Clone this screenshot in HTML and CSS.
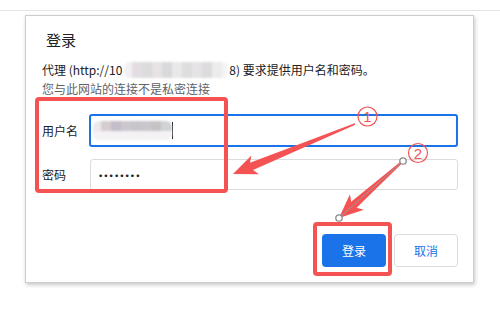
FILE: index.html
```html
<!DOCTYPE html>
<html lang="zh-CN">
<head>
<meta charset="utf-8">
<title>登录</title>
<link rel="stylesheet" href="styles.css">
</head>
<body>
<div class="page">
  <div class="topbar"></div>
  <div class="dialog">
    <div class="title">登录</div>
    <div class="msg">代理 (http://10<span class="mosaic msg-mosaic"></span>8) 要求提供用户名和密码。</div>
    <div class="note">您与此网站的连接不是私密连接</div>
    <div class="row row-user">
      <label class="label">用户名</label>
      <div class="field field-focus"><span class="mosaic user-mosaic"></span><span class="caret"></span></div>
    </div>
    <div class="row row-pass">
      <label class="label">密码</label>
      <div class="field field-plain"><span class="dots">••••••••</span></div>
    </div>
    <div class="actions">
      <button class="btn btn-primary">登录</button>
      <button class="btn btn-secondary">取消</button>
    </div>
  </div>
  <svg class="annot" width="500" height="317" viewBox="0 0 500 317">
    <rect x="37" y="99" width="189" height="92" rx="2" fill="none" stroke="#f55353" stroke-width="4"/>
    <rect x="315" y="224" width="75" height="50" rx="2" fill="none" stroke="#f55353" stroke-width="4"/>
    <polygon fill="#f55353" points="354.7,123.3 250,162.7 251.4,155.6 233,174 259,174.2 253,170.1 355.3,124.7"/>
    <polygon fill="#f55353" points="402.3,160.3 351.2,201.7 349.9,194.2 339,218 363.9,209.8 356.6,207.7 403.7,161.7"/>
    <line x1="403" y1="161" x2="339" y2="218" stroke="#9a9a9a" stroke-width="1"/>
    <circle cx="403" cy="161" r="3.2" fill="#fff" stroke="#8a8a8a" stroke-width="1.3"/>
    <circle cx="339" cy="218" r="3.2" fill="#fff" stroke="#8a8a8a" stroke-width="1.3"/>
    <circle cx="367.5" cy="116.5" r="9.5" fill="none" stroke="#f55353" stroke-width="1.2"/>
    <text x="367.5" y="122" class="num">1</text>
    <circle cx="418" cy="153" r="9.5" fill="none" stroke="#f55353" stroke-width="1.2"/>
    <text x="418" y="158.5" class="num">2</text>
  </svg>
</div>
</body>
</html>
```
FILE: styles.css
```css
html, body {
  margin: 0;
  padding: 0;
  background: #ffffff;
}
body {
  font-family: "Noto Sans CJK SC", "Noto Sans", sans-serif;
  color: #202124;
}
.page {
  position: relative;
  width: 500px;
  height: 317px;
  overflow: hidden;
}
.topbar {
  height: 10px;
  border-bottom: 1px solid #e4e4e4;
}
.dialog {
  margin: 4px 0 0 25px;
  width: 449px;
  height: 268px;
  box-sizing: border-box;
  border: 1px solid #cdcdcd;
  box-shadow: 1px 2px 4px rgba(0, 0, 0, 0.22);
  padding: 14px 15px 15px 16px;
  display: flex;
  flex-direction: column;
  background: #fff;
}
.title {
  font-size: 15px;
  line-height: 20px;
  margin-left: 4px;
  color: #202124;
}
.msg {
  margin-top: 11px;
  font-size: 12px;
  line-height: 18px;
  color: #202124;
  white-space: nowrap;
  display: flex;
  align-items: center;
}
.note {
  margin-top: 1px;
  font-size: 12px;
  line-height: 18px;
  color: #5f6368;
}
.mosaic {
  display: inline-block;
  filter: blur(1.2px);
  border-radius: 6px;
}
.msg-mosaic {
  width: 104px;
  height: 16px;
  margin: 0 1px 0 2px;
  background:
    linear-gradient(to right,
      #f2f0f2 0 8px, #e3dde3 8px 18px, #dcdcdc 18px 28px, #e6e2e6 28px 38px,
      #d9d9db 38px 48px, #e9e9e9 48px 58px, #dedede 58px 68px, #e6e3e6 68px 78px,
      #dcdcdc 78px 88px, #ececec 88px 98px, #f4f4f4 98px 104px);
}
.row {
  display: flex;
  align-items: center;
}
.row-user {
  margin-top: 16px;
  height: 33px;
}
.row-pass {
  margin-top: 12px;
  height: 31px;
}
.label {
  width: 47px;
  font-size: 12px;
  line-height: 18px;
  color: #202124;
  flex: none;
}
.field {
  flex: 1;
  height: 100%;
  box-sizing: border-box;
  border-radius: 3px;
  display: flex;
  align-items: center;
}
.field-focus {
  border: 2px solid #1a73e8;
  padding-left: 2px;
}
.field-plain {
  border: 1px solid #dadce0;
  margin-left: 1px;
  padding-left: 7px;
}
.user-mosaic {
  width: 79px;
  height: 19px;
  background:
    linear-gradient(to bottom, transparent 0 10px, #f4f2f4 10px 19px),
    linear-gradient(to right,
      #ece9ec 0 8px, #d4cccf 8px 18px, #c4bcc9 18px 28px, #cbc7cd 28px 38px,
      #c7c5cc 38px 48px, #cbc6cb 48px 58px, #c6c3c4 58px 68px, #cfd2d6 68px 79px);
}
.caret {
  width: 1px;
  height: 17px;
  background: #202124;
  margin-left: 0;
}
.dots {
  font-family: "DejaVu Sans", sans-serif;
  font-size: 9px;
  line-height: 12px;
  color: #202124;
  letter-spacing: 0;
  margin-top: 2px;
}
.actions {
  margin-top: 44px;
  display: flex;
  justify-content: flex-end;
  gap: 8px;
}
.btn {
  width: 64px;
  height: 33px;
  box-sizing: border-box;
  border-radius: 4px;
  font-family: "Noto Sans CJK SC", "Noto Sans", sans-serif;
  font-size: 12px;
  padding: 0;
  cursor: pointer;
}
.btn-primary {
  background: #1a73e8;
  color: #ffffff;
  border: none;
}
.btn-secondary {
  background: #ffffff;
  color: #1a73e8;
  border: 1px solid #dadce0;
}
.annot {
  position: absolute;
  top: 0;
  left: 0;
  pointer-events: none;
}
.num {
  font-family: "Liberation Sans", sans-serif;
  font-size: 15px;
  fill: #f55353;
  text-anchor: middle;
}
```
